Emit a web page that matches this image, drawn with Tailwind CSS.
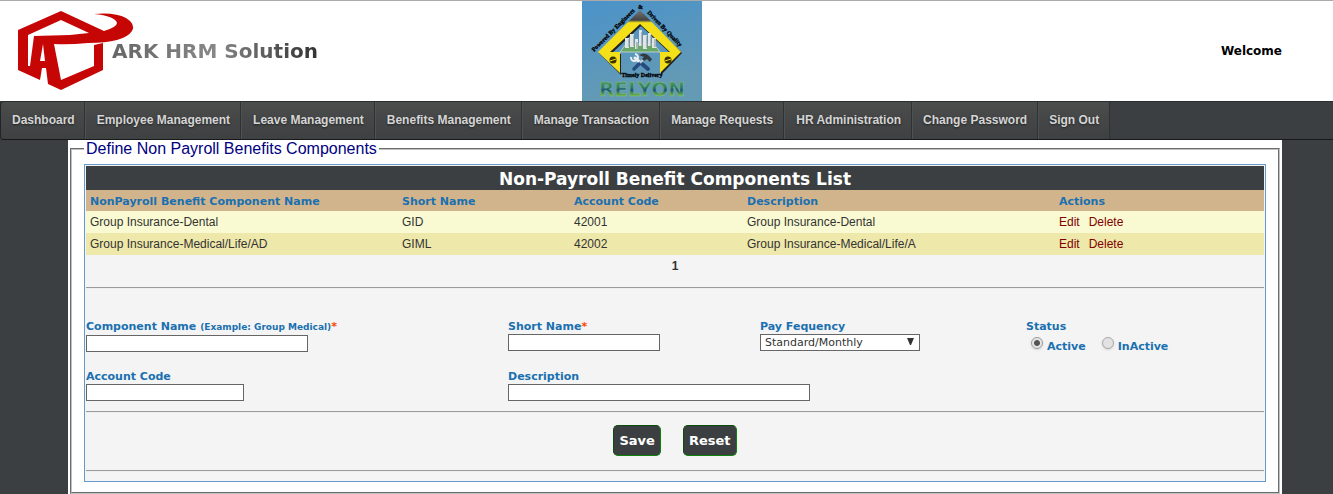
<!DOCTYPE html>
<html lang="en">
<head>
<meta charset="utf-8">
<meta name="viewport" content="width=device-width, initial-scale=1">
<title>ARK HRM Solution</title>
<script src="https://cdn.jsdelivr.net/npm/@tailwindcss/browser@4"></script>
</head>
<body class="min-h-screen bg-[#3c3f41] font-['Liberation_Sans',Arial,sans-serif] text-xs text-[#333333]">

<header class="grid grid-cols-[582px_120px_1fr] items-center h-[101px] border-t border-[#aaaaaa] bg-white">
  <div class="flex items-center pl-[18px]">
    <svg class="shrink-0" width="118" height="82" viewBox="0 0 118 82" aria-hidden="true">
      <path fill="#c60505" fill-rule="evenodd" d="M0 20L43 1L86 21Q99 17 99 13Q97 6 76 4Q97 2 108 8Q118 14 114 21Q106 33 70 33Q50 35 36 34L43 70L76 56V35L85 33V60L43 80L30 74L28 58H24L22 70L0 60ZM43 10L10 25V56L12 56L16 26L52 25L71 23ZM25 34L22 51H27Z"/>
    </svg>
    <span class="-ml-6 font-['DejaVu_Sans',Verdana,sans-serif] text-xl font-bold whitespace-nowrap text-transparent bg-clip-text bg-linear-to-r from-[#666666] via-[#888888] to-[#333333]">ARK HRM Solution</span>
  </div>
  <svg class="w-[120px] h-[100px]" viewBox="0 0 120 100" role="img" aria-label="Relyon">
    <defs>
      <linearGradient id="sky" x1="0" y1="0" x2="0.3" y2="1"><stop offset="0" stop-color="#4b93c9"/><stop offset="1" stop-color="#659ab4"/></linearGradient>
      <linearGradient id="word" x1="0" y1="0" x2="0" y2="1"><stop offset="0.2" stop-color="#4f9a62"/><stop offset="0.45" stop-color="#2c7a6a"/><stop offset="0.55" stop-color="#1f4f86"/><stop offset="0.65" stop-color="#3f8a58"/><stop offset="0.8" stop-color="#79b84e"/></linearGradient>
      <linearGradient id="roof" gradientUnits="userSpaceOnUse" x1="0" y1="9" x2="0" y2="26"><stop offset="0" stop-color="#777"/><stop offset="0.6" stop-color="#444"/><stop offset="0.75" stop-color="#f3e018"/></linearGradient>
    </defs>
    <rect width="120" height="100" fill="url(#sky)"/>
    <path d="M58 10L16 51L38 73V52H28L58 24L88 52H78V73L99 51Z" fill="#222" transform="translate(1 1)"/>
    <path d="M58 9L16 51L38 72V51H28L58 23L88 51H78V72L99 51Z" fill="url(#roof)"/>
    <g fill="#3a3200"><circle cx="31" cy="59" r="3.500"/><circle cx="86" cy="59" r="3.500"/></g>
    <path d="M28 60L34 58M83 60L89 58" stroke="#f3e018"/>
    <path d="M44 43H72L78 51H38Z" fill="#6aa86a" stroke="#cfe0cf" stroke-width="0.800"/>
    <g fill="#dfe6e6"><path d="M43 37H47V47H43ZM48 33H52V46H48ZM53 38H56V48H53ZM57 29H60V45H57ZM61 34H65V48H61ZM66 32H69V45H66ZM70 37H74V47H70Z"/></g>
    <path d="M47 38V46M52 34V45M60 31V45M65 35V47M73 38V46M55 41V48M69 34V45" stroke="#7d8b90"/>
    <path d="M53 57L59 62" stroke="#e8eef2" stroke-width="3" stroke-linecap="round"/>
    <path d="M59 62L66 68" stroke="#254a80" stroke-width="4" stroke-linecap="round"/>
    <path d="M49 56A3.500 3.500 0 1 0 53 53" fill="none" stroke="#e8eef2" stroke-width="2"/>
    <path d="M62 58L56 64" stroke="#c9d2d6" stroke-width="2"/>
    <path d="M57 63L52 68" stroke="#254a80" stroke-width="3.500" stroke-linecap="round"/>
    <path d="M57 54Q62 51 66 54L70 58L68 61L65 58L62 60L60 58L62 56Z" fill="#333b40"/>
    <g font-family="Liberation Serif, serif" font-weight="700" font-size="6" fill="#000" stroke="#000" stroke-width="0.300">
      <text transform="translate(12 51) rotate(-45)">Powered By Engineers</text>
      <text x="56" y="8">&amp;</text>
      <text transform="translate(65 12) rotate(46)">Driven By Quality</text>
      <text x="60" y="76" text-anchor="middle">Timely Delivery</text>
    </g>
    <text x="60" y="95" text-anchor="middle" font-family="DejaVu Sans, sans-serif" font-weight="700" font-size="20" fill="url(#word)" stroke="#7fbd80" stroke-width="0.500">RELYON</text>
  </svg>
  <p class="pr-[51px] text-right font-['DejaVu_Sans',Verdana,sans-serif] text-xs font-bold text-black">Welcome</p>
</header>

<nav class="flex h-[39px] border-y border-l border-t-[#2b2d2e] border-b-[#161819] border-l-[#222425] rounded-l bg-[#3c3f41] text-[#d5d5d5] font-bold [text-shadow:0_1px_2px_#222]">
  <a href="#" class="flex items-center pl-[11px] pr-[9px] pb-0.5 border-r border-[#2f3233] bg-linear-to-b from-[#4b4c4c] to-[#3e4142] rounded-l">Dashboard</a>
  <a href="#" class="flex items-center pl-[11px] pr-2.5 pb-0.5 border-r border-l border-r-[#2f3233] border-l-[#4f5252] bg-linear-to-b from-[#4b4c4c] to-[#3e4142]">Employee Management</a>
  <a href="#" class="flex items-center pl-[11px] pr-2.5 pb-0.5 border-r border-l border-r-[#2f3233] border-l-[#4f5252] bg-linear-to-b from-[#4b4c4c] to-[#3e4142]">Leave Management</a>
  <a href="#" class="flex items-center pl-[11px] pr-2.5 pb-0.5 border-r border-l border-r-[#2f3233] border-l-[#4f5252] bg-linear-to-b from-[#4b4c4c] to-[#3e4142]">Benefits Management</a>
  <a href="#" class="flex items-center pl-[11px] pr-2.5 pb-0.5 border-r border-l border-r-[#2f3233] border-l-[#4f5252] bg-linear-to-b from-[#4b4c4c] to-[#3e4142]">Manage Transaction</a>
  <a href="#" class="flex items-center px-2.5 pb-0.5 border-r border-l border-r-[#2f3233] border-l-[#4f5252] bg-linear-to-b from-[#4b4c4c] to-[#3e4142]">Manage Requests</a>
  <a href="#" class="flex items-center pl-[11px] pr-2.5 pb-0.5 border-r border-l border-r-[#2f3233] border-l-[#4f5252] bg-linear-to-b from-[#4b4c4c] to-[#3e4142]">HR Administration</a>
  <a href="#" class="flex items-center px-2.5 pb-0.5 border-r border-l border-r-[#2f3233] border-l-[#4f5252] bg-linear-to-b from-[#4b4c4c] to-[#3e4142]">Change Password</a>
  <a href="#" class="flex items-center px-2.5 pb-0.5 border-r border-l border-r-[#2f3233] border-l-[#4f5252] bg-linear-to-b from-[#4b4c4c] to-[#3e4142]">Sign Out</a>
</nav>

<main class="ml-[68px] mr-[51px] px-0.5 bg-white">
  <fieldset class="border-2 [border-style:groove] border-[#c0c0c0] px-3 pt-1.5 pb-2.5">
    <legend class="px-0.5 text-base leading-[18px] text-[#000080]">Define Non Payroll Benefits Components</legend>
    <form class="border border-[#6699cc] bg-[#f4f4f4] px-px pt-px pb-[9px]">
      <table class="w-full table-fixed border-collapse text-left">
        <caption class="h-6 bg-[#3c3f41] text-white font-['DejaVu_Sans',Verdana,sans-serif] text-[17px] leading-[26px] font-bold">Non-Payroll Benefit Components List</caption>
        <colgroup><col class="w-[312px]"><col class="w-[172px]"><col class="w-[173px]"><col class="w-[312px]"><col></colgroup>
        <thead>
          <tr class="h-[21px] bg-[#d2b48c] text-[#1a70b0] font-['DejaVu_Sans',Verdana,sans-serif] text-[11px]">
            <th class="px-1 pt-[3px]">NonPayroll Benefit Component Name</th><th class="px-1 pt-[3px]">Short Name</th><th class="px-1 pt-[3px]">Account Code</th><th class="px-1 pt-[3px]">Description</th><th class="px-1 pt-[3px]">Actions</th>
          </tr>
        </thead>
        <tbody>
          <tr class="h-[22px] bg-[#fafad2]">
            <td class="px-1">Group Insurance-Dental</td><td class="px-1">GID</td><td class="px-1">42001</td><td class="px-1">Group Insurance-Dental</td>
            <td class="px-1 text-[#800000]"><a href="#" class="mr-[9px]">Edit</a><a href="#">Delete</a></td>
          </tr>
          <tr class="h-[22px] bg-[#eee8aa]">
            <td class="px-1">Group Insurance-Medical/Life/AD</td><td class="px-1">GIML</td><td class="px-1">42002</td><td class="px-1">Group Insurance-Medical/Life/A</td>
            <td class="px-1 text-[#800000]"><a href="#" class="mr-[9px]">Edit</a><a href="#">Delete</a></td>
          </tr>
        </tbody>
      </table>
      <p class="h-[22px] leading-[22px] text-center font-bold">1</p>
      <hr class="mt-2.5 border-t border-b border-t-[#9a9a9a] border-b-[#eeeeee]">

      <div class="mt-[30px] grid grid-cols-[422px_252px_266px_1fr] gap-y-2.5 font-['DejaVu_Sans',Verdana,sans-serif] text-[11px] leading-[15px] text-[#1a70b0] font-bold">
        <div class="flex flex-col items-start">
          <label for="name">Component Name <small class="text-[9px]">(Example: Group Medical)</small><span class="text-[#ff4400]">*</span></label>
          <input id="name" type="text" class="w-[222px] h-[17px] border border-[#666666] bg-white px-1">
        </div>
        <div class="flex flex-col items-start">
          <label for="short">Short Name<span class="text-[#ff4400]">*</span></label>
          <input id="short" type="text" class="w-[152px] h-[17px] border border-[#666666] bg-white px-1">
        </div>
        <div class="flex flex-col items-start">
          <label for="freq">Pay Fequency</label>
          <div class="relative">
            <select id="freq" class="block w-40 h-[17px] appearance-none border border-[#666666] bg-white px-1 leading-[15px] font-normal text-[#333333]"><option>Standard/Monthly</option></select>
            <svg class="absolute right-1.5 top-1 pointer-events-none" width="7" height="7" viewBox="0 0 7 7" aria-hidden="true"><path d="M0 0H7L4 7H3Z" fill="#333"/></svg>
          </div>
        </div>
        <div role="radiogroup" aria-label="Status">
          <p>Status</p>
          <div class="flex gap-4 pl-[5px]">
            <label class="flex gap-1 leading-[25px]"><input type="radio" name="status" checked class="appearance-none mt-[3px] size-3 rounded-full border border-[#999999] bg-[radial-gradient(circle,#555_0,#555_2.5px,#e6e6e6_3.500px)] shadow-sm">Active</label>
            <label class="flex gap-1 leading-[25px]"><input type="radio" name="status" class="appearance-none mt-[3px] size-3 rounded-full border border-[#aaaaaa] bg-[#e2e2e2] shadow-sm">InActive</label>
          </div>
        </div>
        <div class="flex flex-col items-start">
          <label for="code">Account Code</label>
          <input id="code" type="text" class="w-[158px] h-[17px] border border-[#666666] bg-white px-1">
        </div>
        <div class="col-span-3 flex flex-col items-start">
          <label for="desc">Description</label>
          <input id="desc" type="text" class="w-[302px] h-[17px] border border-[#666666] bg-white px-1">
        </div>
      </div>

      <hr class="mt-2.5 border-t border-b border-t-[#9a9a9a] border-b-[#eeeeee]">
      <div class="mt-3 mb-3.5 flex justify-center gap-[22px] font-['DejaVu_Sans',Verdana,sans-serif] text-[13px] font-bold text-white">
        <button type="submit" class="h-[31px] px-[5px] rounded-[5px] border border-t-[#0a4d0a] border-l-[#0a4d0a] border-r-[#0a850a] border-b-[#0a850a] bg-[#3c3f41]">Save</button>
        <button type="reset" class="h-[31px] px-[5px] rounded-[5px] border border-t-[#0a4d0a] border-l-[#0a4d0a] border-r-[#0a850a] border-b-[#0a850a] bg-[#3c3f41]">Reset</button>
      </div>
      <hr class="border-t border-b border-t-[#9a9a9a] border-b-[#eeeeee]">
    </form>
  </fieldset>
</main>
</body>
</html>
